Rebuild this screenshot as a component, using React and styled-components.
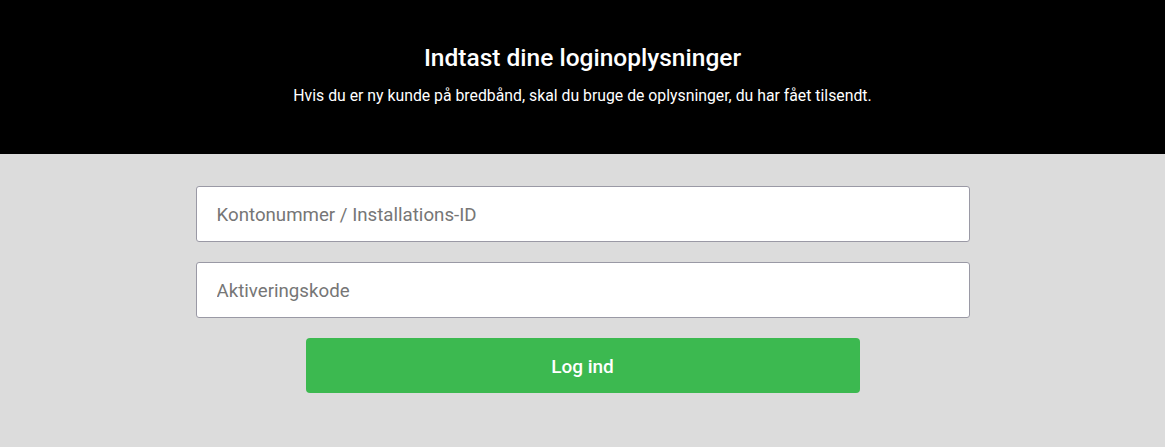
import React from "react";
import styled, { createGlobalStyle } from "styled-components";

const Global = createGlobalStyle`
  html, body { margin: 0; padding: 0; background: #dcdcdc; }
  body { font-family: Roboto, "Liberation Sans", sans-serif; }
  * { box-sizing: border-box; }
`;

const Page = styled.div`
  min-height: 447px;
  background: #dcdcdc;
`;

const Header = styled.header`
  background: #000;
  color: #fff;
  height: 154px;
  display: flex;
  flex-direction: column;
  align-items: center;
  padding-top: 40px;
`;

const Title = styled.h1`
  margin: 0;
  font-size: 24.5px;
  font-weight: 500;
  line-height: 36px;
`;

const Subtitle = styled.p`
  margin: 10px 0 0;
  font-size: 15.8px;
  line-height: 20px;
`;

const Form = styled.form`
  width: 774px;
  margin: 32px auto 0;
  display: flex;
  flex-direction: column;
  align-items: center;
  gap: 20px;
`;

const Input = styled.input`
  width: 100%;
  height: 56px;
  border: 1px solid #9a99a5;
  border-radius: 3px;
  background: #fff;
  padding: 2px 20px 0;
  font-family: inherit;
  font-size: 18.7px;
  color: #333;
  outline: none;
  &::placeholder { color: #767676; }
`;

const Button = styled.button`
  width: 554px;
  height: 55px;
  border: none;
  border-radius: 4px;
  background: #3cb950;
  color: #fff;
  font-family: inherit;
  font-size: 19px;
  font-weight: 500;
  padding-top: 2px;
  cursor: pointer;
`;

export default function App() {
  return (
    <Page>
      <Global />
      <Header>
        <Title>Indtast dine loginoplysninger</Title>
        <Subtitle>
          Hvis du er ny kunde på bredbånd, skal du bruge de oplysninger, du har fået tilsendt.
        </Subtitle>
      </Header>
      <Form onSubmit={(e) => e.preventDefault()}>
        <Input placeholder="Kontonummer / Installations-ID" />
        <Input placeholder="Aktiveringskode" />
        <Button type="submit">Log ind</Button>
      </Form>
    </Page>
  );
}
